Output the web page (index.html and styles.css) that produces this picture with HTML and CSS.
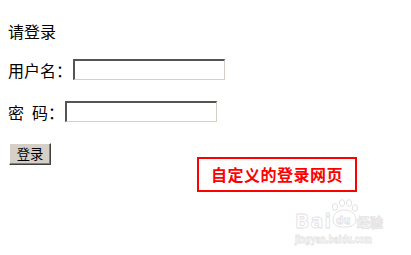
FILE: index.html
```html
<!DOCTYPE html>
<html>
<head lang="zh">
    <meta charset="UTF-8">
    <title>登录</title>
    <link rel="stylesheet" href="styles.css">
</head>
<body>

<div class="page">
    <div class="title">请登录</div>

    <div class="row">
        <span class="label">用户名：</span>
        <input type="text" class="field">
    </div>

    <div class="row">
        <span class="label spaced">密 码：</span>
        <input type="password" class="field">
    </div>

    <button class="submit">登录</button>
</div>

<div class="note">自定义的登录网页</div>

<svg class="watermark" width="110" height="50" viewBox="0 0 110 50">
    <g fill="#fff" stroke="#e2e2e2" stroke-width="1">
        <ellipse cx="42" cy="9" rx="2.6" ry="3.4"/>
        <ellipse cx="49" cy="5" rx="2.6" ry="3.4"/>
        <ellipse cx="56" cy="5" rx="2.6" ry="3.4"/>
        <ellipse cx="62" cy="10" rx="2.6" ry="3.4"/>
        <path d="M40 22 C40 15 46 12 51 12 C57 12 63 15 63 22 C63 27 58 29 51 29 C44 29 40 27 40 22 Z"/>
    </g>
    <g font-family="'DejaVu Sans', sans-serif" font-weight="bold" fill="#fff" stroke="#e2e2e2" stroke-width="0.8">
        <text x="2" y="30" font-size="19" textLength="36">Bai</text>
        <text x="43" y="26" font-size="10">du</text>
        <text x="64" y="29" font-size="13" font-family="'Noto Sans CJK SC', sans-serif">经验</text>
        <text x="2" y="45" font-size="10" textLength="77" lengthAdjust="spacingAndGlyphs">jingyan.baidu.com</text>
    </g>
</svg>

</body>
</html>
```

FILE: styles.css
```css
body, html {
    margin: 0;
    padding: 0;
    background: #fff;
}

body {
    width: 411px;
    height: 255px;
    position: relative;
    font-family: "Noto Sans CJK SC", sans-serif;
    font-size: 16px;
    color: #000;
}

.page {
    padding: 23px 0 0 8px;
}

.title {
    height: 16px;
    line-height: 16px;
}

.row {
    display: flex;
    align-items: center;
    height: 21px;
    margin-top: 21px;
}

.title + .row {
    margin-top: 20px;
}

.label {
    line-height: 16px;
    white-space: pre;
}

.label.spaced {
    word-spacing: 4.4px;
}

.field {
    box-sizing: border-box;
    width: 152px;
    height: 21px;
    margin: 0 0 0 1px;
    padding: 0 2px;
    border-style: solid;
    border-width: 2px 1px 1px 2px;
    border-color: #555 #d4d0c8 #d4d0c8 #555;
    background: #fff;
    outline: none;
}

.submit {
    display: block;
    box-sizing: border-box;
    width: 42px;
    height: 22px;
    margin: 21px 0 0 1px;
    padding: 0;
    font-family: "Noto Sans CJK SC", sans-serif;
    font-size: 13.33px;
    line-height: 16px;
    color: #000;
    background: #d4d0c8;
    border: 1px solid;
    border-color: #fff #404040 #404040 #fff;
    box-shadow: inset -1px -1px 0 #808080;
}

.note {
    position: absolute;
    left: 197px;
    top: 157px;
    box-sizing: border-box;
    width: 160px;
    height: 35px;
    border: 2px solid #f00;
    color: #f00;
    font-weight: bold;
    font-size: 16px;
    line-height: 31px;
    text-align: center;
    letter-spacing: 0.5px;
}

.watermark {
    position: absolute;
    left: 293px;
    top: 198px;
}
```
